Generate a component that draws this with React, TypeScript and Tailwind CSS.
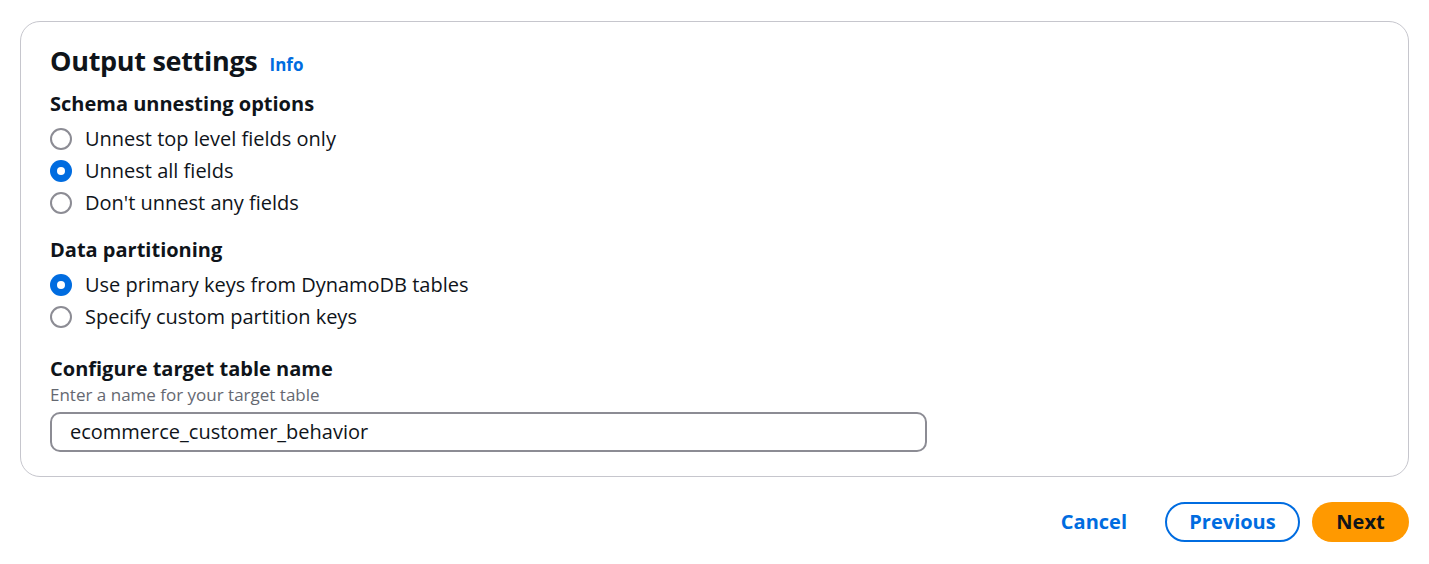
const options1 = [
  { label: "Unnest top level fields only", checked: false },
  { label: "Unnest all fields", checked: true },
  { label: "Don't unnest any fields", checked: false },
];

const options2 = [
  { label: "Use primary keys from DynamoDB tables", checked: true },
  { label: "Specify custom partition keys", checked: false },
];

function Radio({ label, checked }: { label: string; checked: boolean }) {
  return (
    <div className="flex items-center h-[32px]">
      {checked ? (
        <span className="w-[22px] h-[22px] rounded-full bg-[#006ce0] flex items-center justify-center">
          <span className="w-[8px] h-[8px] rounded-full bg-white" />
        </span>
      ) : (
        <span className="w-[22px] h-[22px] rounded-full border-2 border-[#8c8c94] bg-white" />
      )}
      <span className="ml-[13px] text-[20px] text-[#0f141a]">{label}</span>
    </div>
  );
}

export default function App() {
  return (
    <div
      className="bg-white w-[1429px] h-[564px] px-[20px] pt-[21px]"
      style={{ fontFamily: '"Open Sans", "Noto Sans", sans-serif' }}
    >
      <div className="border border-[#c6c6cd] rounded-[20px] pl-[29px] pr-[29px] pt-[20px] pb-[24px]">
        <div className="flex items-baseline h-[38px]">
          <h2 className="text-[27px] font-bold text-[#0f141a] leading-[38px] tracking-[-0.3px]">
            Output settings
          </h2>
          <span className="ml-[12px] text-[17px] font-bold text-[#006ce0]">
            Info
          </span>
        </div>

        <div className="mt-[8px] text-[20px] font-bold text-[#0f141a] leading-[32px] h-[32px]">
          Schema unnesting options
        </div>
        <div className="mt-[3px] flex flex-col">
          {options1.map((o) => (
            <Radio key={o.label} label={o.label} checked={o.checked} />
          ))}
        </div>

        <div className="mt-[15px] text-[20px] font-bold text-[#0f141a] leading-[32px] h-[32px]">
          Data partitioning
        </div>
        <div className="mt-[3px] flex flex-col">
          {options2.map((o) => (
            <Radio key={o.label} label={o.label} checked={o.checked} />
          ))}
        </div>

        <div className="mt-[20px] text-[20px] font-bold text-[#0f141a] leading-[32px] h-[32px]">
          Configure target table name
        </div>
        <div className="text-[17px] text-[#656871] leading-[22px] h-[22px] -mt-[1px]">
          Enter a name for your target table
        </div>
        <div className="mt-[6px] w-[877px] h-[40px] border-2 border-[#8c8c94] rounded-[10px] flex items-center pl-[18px] text-[20px] text-[#0f141a]">
          ecommerce_customer_behavior
        </div>
      </div>

      <div className="flex justify-end items-center mt-[25px] h-[40px]">
        <button className="text-[20px] font-bold text-[#006ce0] mr-[38px]">
          Cancel
        </button>
        <button className="w-[135px] h-[40px] rounded-full border-2 border-[#006ce0] text-[20px] font-bold text-[#006ce0]">
          Previous
        </button>
        <button className="ml-[12px] w-[97px] h-[40px] rounded-full bg-[#ff9900] text-[20px] font-bold text-[#0f141a]">
          Next
        </button>
      </div>
    </div>
  );
}
